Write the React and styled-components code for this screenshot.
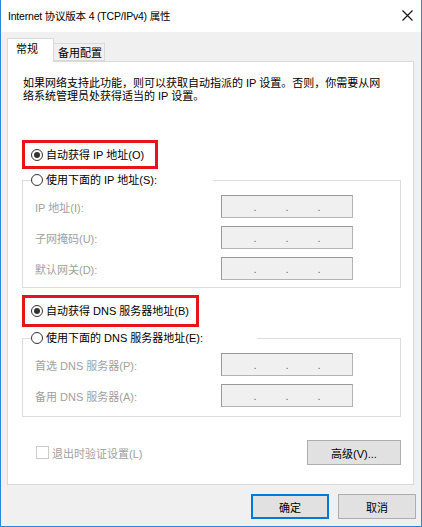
import React from 'react';
import styled, { createGlobalStyle } from 'styled-components';

const GlobalStyle = createGlobalStyle`
    html, body {
        margin: 0;
        padding: 0;
        background: #ffffff;
    }
    body {
        font-family: "Liberation Sans", "Noto Sans CJK SC", sans-serif;
        font-size: 11px;
        color: #000;
    }
`;

const Window = styled.div`
    width: 422px;
    height: 527px;
    box-sizing: border-box;
    border: 1px solid #2b88d8;
    border-top: none;
    background: #f0f0f0;
    display: flex;
    flex-direction: column;
`;

const TitleBar = styled.div`
    height: 30px;
    flex-shrink: 0;
    background: #ffffff;
    display: flex;
    align-items: center;
    justify-content: space-between;
    padding: 0 8px 2px 7px;
    font-size: 10.5px;
    letter-spacing: -0.2px;
`;

const CloseIcon = () => (
    <svg width="11" height="11" viewBox="0 0 11 11">
        <path d="M0.5 0.5 L10.5 10.5 M10.5 0.5 L0.5 10.5" stroke="#111" strokeWidth="1.1" fill="none" />
    </svg>
);

const Body = styled.div`
    flex: 1;
    display: flex;
    flex-direction: column;
    padding: 6px 7px 0 6px;
`;

const TabStrip = styled.div`
    display: flex;
    align-items: flex-end;
    height: 23px;
    position: relative;
    z-index: 1;
`;

const Tab = styled.div`
    box-sizing: border-box;
    height: ${p => (p.active ? '24px' : '18px')};
    padding: ${p => (p.active ? '0 0 5px 8px' : '0 0 0 4px')};
    width: ${p => p.w}px;
    white-space: nowrap;
    background: ${p => (p.active ? '#ffffff' : '#f0f0f0')};
    border: 1px solid #d9d9d9;
    border-bottom: ${p => (p.active ? 'none' : '1px solid #d9d9d9')};
    border-left: ${p => (p.active ? '1px solid #d9d9d9' : 'none')};
    margin-bottom: ${p => (p.active ? '-1px' : '0')};
    display: flex;
    align-items: center;
`;

const Panel = styled.div`
    height: 424px;
    box-sizing: border-box;
    background: #ffffff;
    border: 1px solid #d9d9d9;
    padding: 15px 12px 0 14px;
    display: flex;
    flex-direction: column;
`;

const Description = styled.p`
    margin: 0;
    line-height: 13px;
    padding-left: 1px;
    white-space: nowrap;
`;

const Highlight = styled.div`
    box-sizing: border-box;
    width: ${p => p.w}px;
    height: ${p => p.h}px;
    margin-top: ${p => p.mt}px;
    border: 3px solid #e5131d;
    display: flex;
    align-items: center;
    padding-left: 6px;
`;

const RadioLabel = styled.label`
    display: flex;
    align-items: center;
    gap: 3px;
    white-space: nowrap;
    line-height: 16px;
`;

const RadioCircle = styled.span`
    width: 12px;
    height: 12px;
    box-sizing: border-box;
    border-radius: 50%;
    border: 1px solid #333;
    background: #fff;
    display: flex;
    align-items: center;
    justify-content: center;

    &::after {
        content: '';
        width: 6px;
        height: 6px;
        border-radius: 50%;
        background: ${p => (p.checked ? '#333' : 'transparent')};
    }
`;

const Radio = ({ checked, children }) => (
    <RadioLabel>
        <RadioCircle checked={checked} />
        {children}
    </RadioLabel>
);

const GroupBox = styled.fieldset`
    margin: ${p => p.mt}px 0 0 0;
    padding: 0 0 ${p => p.pb}px 12px;
    border: 1px solid #dcdcdc;
    min-width: 0;
`;

const Legend = styled.legend`
    margin-left: -4px;
    padding: 0;
    width: ${p => p.w}px;
    height: 16px;
    background: #ffffff;
    display: flex;
    align-items: center;
`;

const Rows = styled.div`
    display: flex;
    flex-direction: column;
    gap: 8px;
    margin-top: ${p => p.mt}px;
`;

const FieldRow = styled.div`
    display: flex;
    align-items: center;
    justify-content: space-between;
    padding-right: 47px;
`;

const FieldLabel = styled.span`
    color: #a0a0a0;
    white-space: nowrap;
`;

const IpBox = styled.div`
    width: 132px;
    height: 23px;
    box-sizing: border-box;
    border: 1px solid #b4b4b4;
    border-top-color: #9a9a9a;
    border-left-color: #9a9a9a;
    background: #f0f0f0;
    display: flex;
    align-items: center;
    justify-content: center;
    gap: 29px;
    color: #6d6d6d;
    padding-top: 1px;
`;

const IpField = () => (
    <IpBox>
        <span>.</span>
        <span>.</span>
        <span>.</span>
    </IpBox>
);

const Footer = styled.div`
    display: flex;
    align-items: center;
    justify-content: space-between;
    margin-top: 23px;
    padding-left: 14px;
`;

const CheckLabel = styled.label`
    display: flex;
    align-items: center;
    gap: 3px;
    color: #a0a0a0;
`;

const CheckBox = styled.span`
    width: 13px;
    height: 13px;
    box-sizing: border-box;
    border: 1px solid #cccccc;
    background: #fff;
`;

const Button = styled.button`
    font: inherit;
    color: #000;
    width: ${p => p.w}px;
    height: 25px;
    box-sizing: border-box;
    background: #e1e1e1;
    border: 1px solid ${p => (p.primary ? '#0078d7' : '#adadad')};
    box-shadow: ${p => (p.primary ? 'inset 0 0 0 1px #0078d7' : 'none')};
    padding: 0;
    display: flex;
    align-items: center;
    justify-content: center;
`;

const ButtonBar = styled.div`
    display: flex;
    justify-content: flex-end;
    gap: 9px;
    padding: 9px 0 0 0;
    margin-right: -2px;
`;

export default function App() {
    return (
        <>
            <GlobalStyle />
            <Window>
                <TitleBar>
                    <span>Internet 协议版本 4 (TCP/IPv4) 属性</span>
                    <CloseIcon />
                </TitleBar>
                <Body>
                    <TabStrip>
                        <Tab active w={47}>常规</Tab>
                        <Tab w={51}>备用配置</Tab>
                    </TabStrip>
                    <Panel>
                        <Description>
                            如果网络支持此功能，则可以获取自动指派的 IP 设置。否则，你需要从网
                            <br />
                            络系统管理员处获得适当的 IP 设置。
                        </Description>

                        <Highlight w={136} h={29} mt={37}>
                            <Radio checked>自动获得 IP 地址(O)</Radio>
                        </Highlight>

                        <GroupBox mt={3} pb={7}>
                            <Legend w={182}>
                                <Radio>使用下面的 IP 地址(S):</Radio>
                            </Legend>
                            <Rows mt={7}>
                                <FieldRow>
                                    <FieldLabel>IP 地址(I):</FieldLabel>
                                    <IpField />
                                </FieldRow>
                                <FieldRow>
                                    <FieldLabel>子网掩码(U):</FieldLabel>
                                    <IpField />
                                </FieldRow>
                                <FieldRow>
                                    <FieldLabel>默认网关(D):</FieldLabel>
                                    <IpField />
                                </FieldRow>
                            </Rows>
                        </GroupBox>

                        <Highlight w={177} h={32} mt={7}>
                            <Radio checked>自动获得 DNS 服务器地址(B)</Radio>
                        </Highlight>

                        <GroupBox mt={3} pb={9}>
                            <Legend w={226}>
                                <Radio>使用下面的 DNS 服务器地址(E):</Radio>
                            </Legend>
                            <Rows mt={7}>
                                <FieldRow>
                                    <FieldLabel>首选 DNS 服务器(P):</FieldLabel>
                                    <IpField />
                                </FieldRow>
                                <FieldRow>
                                    <FieldLabel>备用 DNS 服务器(A):</FieldLabel>
                                    <IpField />
                                </FieldRow>
                            </Rows>
                        </GroupBox>

                        <Footer>
                            <CheckLabel>
                                <CheckBox />
                                退出时验证设置(L)
                            </CheckLabel>
                            <Button w={94}>高级(V)...</Button>
                        </Footer>
                    </Panel>
                    <ButtonBar>
                        <Button primary w={78}>确定</Button>
                        <Button w={78}>取消</Button>
                    </ButtonBar>
                </Body>
            </Window>
        </>
    );
}
